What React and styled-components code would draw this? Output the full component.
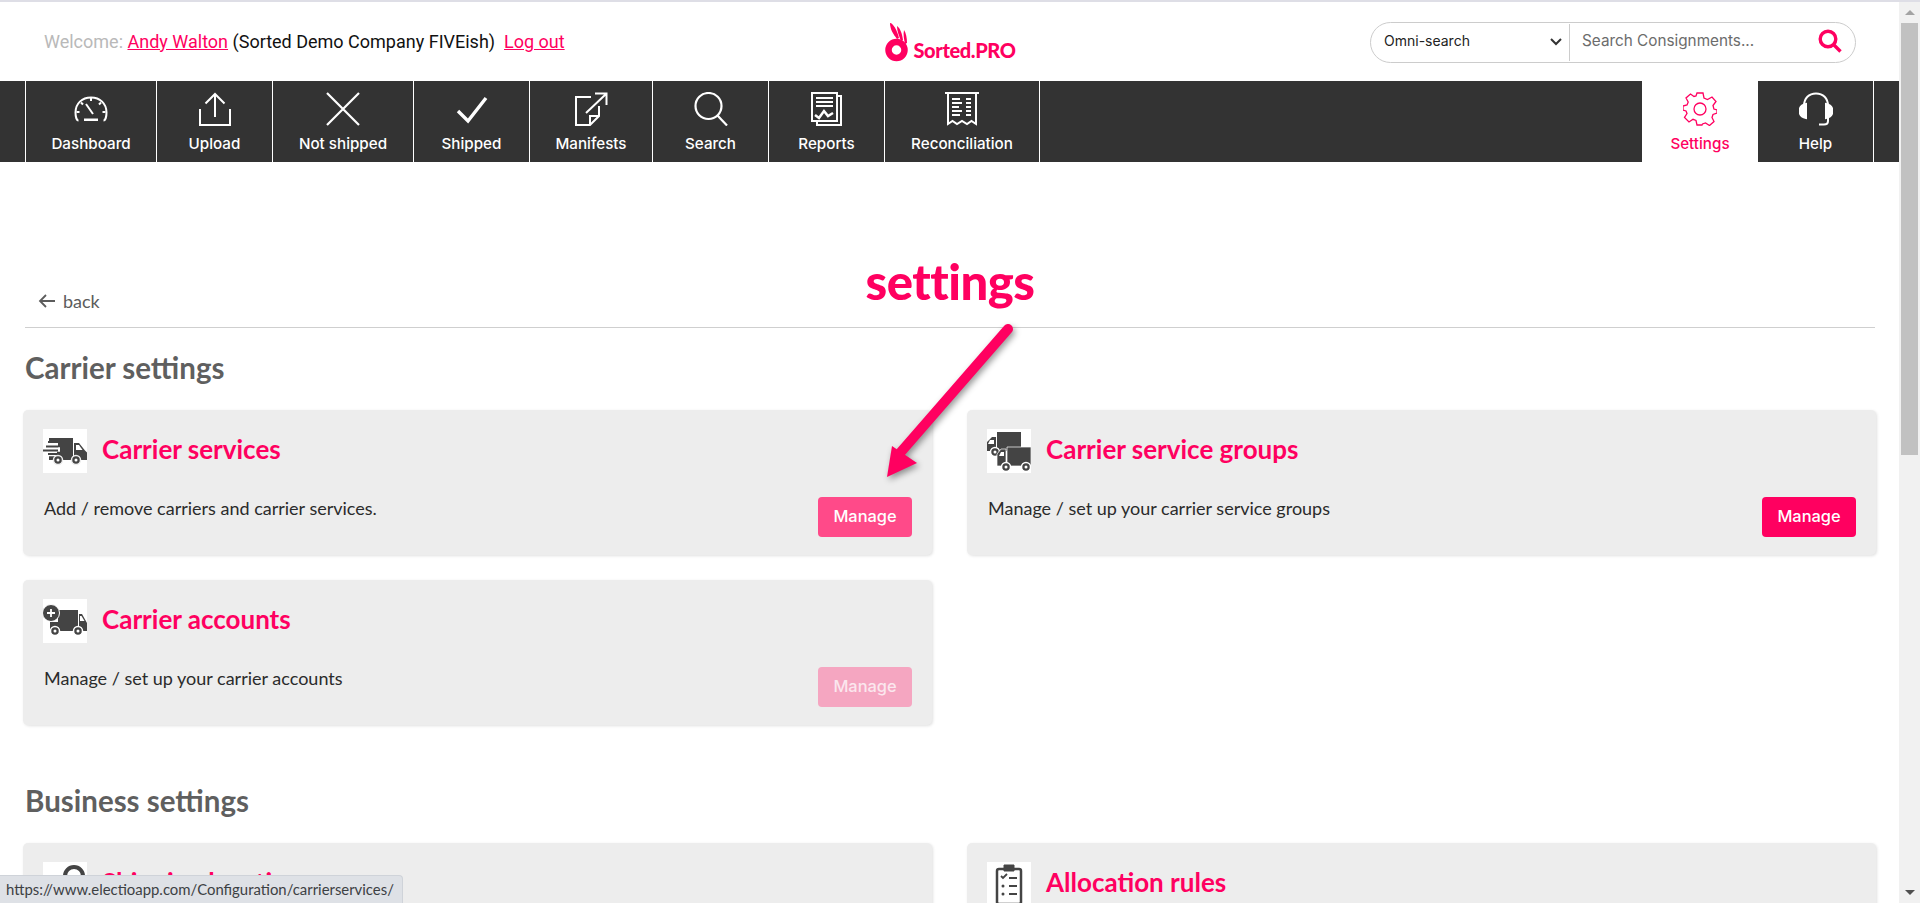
import React from 'react';
import styled, { createGlobalStyle } from 'styled-components';

const PINK = '#ff0060';
const Global = createGlobalStyle`
  html, body { margin: 0; padding: 0; height: 903px; overflow: hidden; background: #fff; }
  * { box-sizing: border-box; }
  body { font-family: "Lato", "Liberation Sans", sans-serif; color: #333; }
`;

const Page = styled.div`
  position: relative; width: 1920px; height: 903px; overflow: hidden; display: flex; flex-direction: column;
`;
const TopStrip = styled.div`height: 2px; background: #dedee6; flex: none;`;
const Body = styled.div`flex: 1; display: flex; min-height: 0;`;
const Main = styled.div`flex: 1; min-width: 0; overflow: hidden; display: flex; flex-direction: column;`;

const Scrollbar = styled.div`
  width: 21px; flex: none; background: #f1f1f1; display: flex; flex-direction: column; align-items: center;
`;
const ScrollBtn = styled.div`
  height: 21px; flex: none; display: flex; align-items: center; justify-content: center; width: 100%;
  margin-top: ${p => (p.$down ? 'auto' : '0')};
  &::before {
    content: ''; width: 0; height: 0; border-left: 5px solid transparent; border-right: 5px solid transparent;
    ${p => (p.$down ? 'border-top: 5px solid #505050;' : 'border-bottom: 5px solid #a3a3a3;')}
  }
`;
const Thumb = styled.div`width: 17px; height: 432px; background: #c1c1c1; flex: none;`;

const Header = styled.header`
  height: 79px; flex: none; display: grid; grid-template-columns: 1fr auto 1fr; align-items: center;
  padding: 0 43px 0 44px;
`;
const Welcome = styled.div`
  font-family: "Roboto", "Liberation Sans", sans-serif; font-size: 18px; color: #111; white-space: nowrap;
`;
const Muted = styled.span`color: #b9b9b9;`;
const TopLink = styled.a`color: ${PINK}; text-decoration: underline;`;
const LogoWrap = styled.div`display: flex; align-items: flex-end; gap: 3px; height: 40px;`;
const LogoText = styled.span`
  font-family: "Lato", sans-serif; font-weight: 900; font-size: 20px; line-height: 24px; color: ${PINK};
  letter-spacing: -0.4px;
`;
const SearchBox = styled.div`
  justify-self: end; width: 486px; height: 41px; border: 1px solid #ccc; border-radius: 21px;
  display: flex; align-items: center; margin-top: 1px;
`;
const OmniSelect = styled.div`
  width: 199px; height: 37px; flex: none; border-right: 1px solid #ccc; padding: 0 7px 4px 13px;
  display: flex; align-items: center; justify-content: space-between;
  font-family: "Inter", sans-serif; font-size: 14px; color: #222;
  svg { margin-top: 4px; }
`;
const SearchField = styled.div`
  flex: 1; padding: 0 13px 3px 12px; display: flex; align-items: center; justify-content: space-between;
  font-family: "Inter", sans-serif; font-size: 15.3px; color: #6c6c6c;
`;

const Nav = styled.nav`
  height: 81px; flex: none; background: #333; display: flex; padding-left: 25px; font-family: "Inter", sans-serif;
`;
const NavItem = styled.a`
  width: ${p => p.$w}px; flex: none; display: flex; flex-direction: column; align-items: center;
  padding-top: 11px; font-size: 15.2px; font-weight: 500; line-height: 18px;
  color: ${p => (p.$active ? PINK : '#fff')};
  background: ${p => (p.$active ? '#fff' : 'transparent')};
  border-left: ${p => (p.$active || p.$noEdge ? '0' : '1px solid #fff')};
  border-right: ${p => (p.$last ? '1px solid #fff' : '0')};
  svg { display: block; margin-bottom: 9px; }
`;
const NavSpacer = styled.div`flex: 1;`;
const NavEnd = styled.div`flex: 0 0 25px;`;

const Content = styled.main`padding: 0 23px 0 23px; flex: none;`;
const BackRow = styled.div`
  display: grid; grid-template-columns: 1fr auto 1fr; padding-top: 91px; padding-bottom: 14px;
  margin: 0 1px 0 2px; border-bottom: 1px solid #cfcfcf; height: 166px;
`;
const BackLink = styled.a`
  align-self: end; display: flex; align-items: center; gap: 7px; padding-left: 13px; margin-top: 1px;
  font-size: 18px; line-height: 24px; color: #5c5c5c;
`;
const PageTitle = styled.h1`
  margin: 0; font-weight: 900; font-size: 49px; line-height: 56px; color: ${PINK}; letter-spacing: -0.5px;
`;
const SectionTitle = styled.h2`
  margin: ${p => p.$top}px 0 26px 2px; font-weight: 700; font-size: 29.5px; line-height: 32px; color: #5f5f5f;
`;
const CardGrid = styled.div`display: grid; grid-template-columns: 909px 909px; gap: 25px 35px;`;
const Card = styled.section`
  min-height: 145px; background: #ededed; border-radius: 5px; padding: 19px 20px 0 20px;
  box-shadow: 1px 1px 3px rgba(0,0,0,.12);
`;
const CardHead = styled.div`display: flex; align-items: center; gap: 15px;`;
const IconBox = styled.div`
  width: 44px; height: 44px; background: #fff; flex: none;
  svg { display: block; }
`;
const CardTitle = styled.h3`margin: 0 0 4px; font-weight: 700; font-size: 26px; line-height: 28px; color: ${PINK};`;
const CardRow = styled.div`display: flex; justify-content: space-between; align-items: flex-start; margin-top: 23px; padding-left: 1px;`;
const CardText = styled.p`margin: 0; font-size: 18px; line-height: 24px; color: #2b2b2b;`;
const ManageBtn = styled.button`
  width: 94px; height: 40px; border: 0; border-radius: 4px; flex: none; margin-top: 1px; padding: 0 0 2px;
  font-family: "Inter", sans-serif; font-weight: 500; font-size: 16.4px;
  background: ${p => ({ hover: '#ff4a89', off: '#f5a6c1' }[p.$state] || PINK)};
  color: ${p => (p.$state === 'off' ? '#fbe7ee' : '#fff')};
`;
const StatusBar = styled.div`
  position: absolute; left: 0; bottom: 0; width: 403px; height: 28px; background: #dee1e6;
  border: 1px solid #cfd3d9; border-left: 0; border-bottom: 0; border-top-right-radius: 4px;
  padding-left: 6px; font-size: 14.9px; line-height: 27px; color: #3c4043; white-space: nowrap;
`;
const ArrowOverlay = styled.svg`
  position: absolute; left: 870px; top: 315px; filter: drop-shadow(2px 3px 3px rgba(0,0,0,.4));
`;

const Ico = ({ children, color = '#fff', sw = 2 }) => (
  <svg width="34" height="34" viewBox="0 0 34 34" fill="none" stroke={color} strokeWidth={sw}>{children}</svg>
);

const icons = {
  dash: <Ico><path d="M4.5 28.5C2.5 28.500 1.500 24 1.500 20.500 1.500 11.500 8 5.500 17 5.500s15.500 6 15.500 15c0 3.500-1 8-3 8" /><path d="M17 6v3M7 10.500l2 2M27 10.500l-2 2M2.500 20h3M31.500 20h-3M12 12l7 10" /><path d="M10 26.500h14v2.500H10z" fill="#fff" stroke="none" /></Ico>,
  upload: <Ico><path d="M2 17v16h30V17" /><path d="M17 25V2M7.500 11.500 17 2l9.500 9.500" /></Ico>,
  x: <Ico sw={2.2}><path d="M1 1l32 32M33 1 1 33" /></Ico>,
  check: <Ico sw={3.4}><path d="M3 19l10 10L31 6" /></Ico>,
  manifest: <Ico><path d="M17 5H2v28h14l9-9V14" /><path d="M16 33v-9h9" /><path d="M12 21 32 2M21 1.500h11.500V13" /></Ico>,
  search: <Ico sw={2.2}><circle cx="14.500" cy="14" r="13" /><path d="M23.500 23.500 33 33.500" /></Ico>,
  reports: <Ico><path d="M27 4h4v29H7v-4" /><rect x="2" y="1" width="25" height="28" /><path d="M6 6h17M6 10h17M6 14h17" /><path d="M5 23l4 3 5-7 4 5 5-3" strokeWidth="2.500" /></Ico>,
  recon: <Ico><path d="M0 1h34" /><path d="M3 1v31l4.500-3 4.500 3 5-3 5 3 4.500-3 4.500 3V1" /><path d="M7 7h8M7 11h10M7 15h7M7 19h10M7 23h8M21 7h5M21 11h5M21 15h5M21 19h5M21 23h5" /></Ico>,
  gear: <Ico color={PINK} sw={1.3}><circle cx="17" cy="17" r="6" /><path d="M14 1h6l1 5 3.500 1.500L29 5l4 4.500-3 4 .9 3.500 3.100 1v3l-4 1.500-1 3 2 4-4.500 4-4-2.500-3 1L19 33h-5l-1-4.500-3-1.200L6 30l-4.500-4.500L4 21.500 3 19l-3-1v-4l4-1 1.200-3L3 6l4.500-4L11 4.500 13 4z" /></Ico>,
  help: <Ico><path d="M5 18V14C5 6 10 1.500 17 1.500S29 6 29 14v15c0 2.500-2 3.500-4 3.500h-5" /><path d="M7 12C2 13 .5 16 .5 19s2 6 6.500 7zM27 12c5 1 6.500 4 6.500 7s-2 6-6.500 7z" fill="#fff" /></Ico>,
};

const navLeft = [
  ['Dashboard', 131, 'dash'], ['Upload', 116, 'upload'], ['Not shipped', 141, 'x'], ['Shipped', 116, 'check'],
  ['Manifests', 123, 'manifest'], ['Search', 116, 'search'], ['Reports', 116, 'reports'], ['Reconciliation', 156, 'recon'],
];

const D = '#444';
const FastTruck = () => (
  <svg width="44" height="44" viewBox="0 0 44 44">
    <path d="M6 9h24v22H6z" fill={D} />
    <path d="M31 14h5l6 7.500 2 2V31H31z" fill={D} />
    <path d="M33 16h3l3.500 5H33z" fill="#fff" />
    <path d="M0 16h15M3 20.500h14M0 25h14" stroke="#fff" strokeWidth="4.500" />
    <path d="M5 13h11M0 21.500h15M3 17.500h12M5 25h10" stroke={D} strokeWidth="2" />
    <circle cx="15" cy="31" r="4.500" fill={D} stroke="#ededed" strokeWidth="1.500" /><circle cx="15" cy="31" r="1.500" fill="#fff" />
    <circle cx="33" cy="31" r="4.500" fill={D} stroke="#ededed" strokeWidth="1.500" /><circle cx="33" cy="31" r="1.500" fill="#fff" />
  </svg>
);
const Trucks = () => (
  <svg width="44" height="44" viewBox="0 0 44 44">
    <path d="M10 3h24v15H20v4H10zM9 8H5L0 13v9h9z" fill={D} />
    <path d="M3 11h4v4H1z" fill="#fff" />
    <circle cx="8" cy="23" r="4.500" fill={D} stroke="#fff" strokeWidth="1.500" /><circle cx="8" cy="23" r="1.500" fill="#fff" />
    <path d="M20 18h24v19H20zM19 20h-5l-4 5v12h9z" fill={D} stroke="#fff" strokeWidth=".7" />
    <path d="M14 23h3v4h-5z" fill="#fff" />
    <circle cx="19" cy="38" r="4.500" fill={D} stroke="#fff" strokeWidth="1.500" /><circle cx="19" cy="38" r="1.500" fill="#fff" />
    <circle cx="39" cy="38" r="4.500" fill={D} stroke="#fff" strokeWidth="1.500" /><circle cx="39" cy="38" r="1.500" fill="#fff" />
  </svg>
);
const PlusTruck = () => (
  <svg width="44" height="44" viewBox="0 0 44 44">
    <path d="M15 11h20v21H7v-9h8zM36 15h3l5 9v8h-8z" fill={D} />
    <path d="M37 17h1.500l3 5H37z" fill="#fff" />
    <circle cx="8" cy="14" r="8.500" fill={D} stroke="#fff" strokeWidth="1" />
    <path d="M8 10v8M4 14h8" stroke="#fff" strokeWidth="1.800" />
    <circle cx="12" cy="32" r="4.500" fill={D} stroke="#fff" strokeWidth="1.500" /><circle cx="12" cy="32" r="1.500" fill="#fff" />
    <circle cx="35" cy="32" r="4.500" fill={D} stroke="#fff" strokeWidth="1.500" /><circle cx="35" cy="32" r="1.500" fill="#fff" />
  </svg>
);
const Pin = () => (
  <svg width="44" height="44" viewBox="0 0 44 44">
    <circle cx="31" cy="14" r="9" fill="none" stroke={D} strokeWidth="4" />
    <path d="M31 44 22 22h18z" fill={D} />
  </svg>
);
const Clipboard = () => (
  <svg width="44" height="44" viewBox="0 0 44 44" fill="none" stroke={D}>
    <rect x="10" y="7" width="24" height="35" rx="2" strokeWidth="2.500" />
    <path d="M17 3h10v6H17z" fill={D} strokeWidth="1" />
    <path d="M14 14l2 2 4-4" strokeWidth="1.800" />
    <path d="M22 16h8M22 24h8M22 32h8" strokeWidth="2" />
    <circle cx="16" cy="24" r="1.500" fill={D} stroke="none" />
    <circle cx="16" cy="32" r="1.500" fill={D} stroke="none" />
  </svg>
);
const LogoMark = () => (
  <svg width="26" height="40" viewBox="0 0 26 40">
    <circle cx="11.500" cy="28" r="8" fill="none" stroke={PINK} strokeWidth="6.500" />
    <path d="M5 1c3 0 7 7 9 15l-2 1C8 12 5 7 5 1z" fill={PINK} />
    <path d="M12 4c3 2 5 7 6 14l-2 1C14 14 12 9 12 4z" fill={PINK} />
    <path d="M19 8c2 3 3 8 3 13l-2 1c-1-5-2-9-1-14z" fill={PINK} />
  </svg>
);

const CardItem = ({ icon, title, text, state }) => (
  <Card>
    <CardHead><IconBox>{icon}</IconBox><CardTitle>{title}</CardTitle></CardHead>
    {text && (
      <CardRow>
        <CardText>{text}</CardText>
        <ManageBtn $state={state}>Manage</ManageBtn>
      </CardRow>
    )}
  </Card>
);

export default function App() {
  return (
    <Page>
      <Global />
      <TopStrip />
      <Body>
        <Main>
          <Header>
            <Welcome>
              <Muted>Welcome: </Muted><TopLink>Andy Walton</TopLink> (Sorted Demo Company FIVEish)&nbsp; <TopLink>Log out</TopLink>
            </Welcome>
            <LogoWrap><LogoMark /><LogoText>Sorted.PRO</LogoText></LogoWrap>
            <SearchBox>
              <OmniSelect>
                Omni-search
                <svg width="12" height="8" viewBox="0 0 12 8" fill="none" stroke="#333" strokeWidth="2"><path d="M1 1l5 5 5-5" /></svg>
              </OmniSelect>
              <SearchField>
                Search Consignments...
                <svg width="24" height="24" viewBox="0 0 24 24" fill="none" stroke={PINK} strokeWidth="3.400"><circle cx="10" cy="10" r="7.800" /><path d="M15.500 15.500l7 7" /></svg>
              </SearchField>
            </SearchBox>
          </Header>
          <Nav>
            {navLeft.map(([label, w, key], i) => (
              <NavItem key={label} $w={w} $last={i === navLeft.length - 1}>{icons[key]}{label}</NavItem>
            ))}
            <NavSpacer />
            <NavItem $w={116} $active>{icons.gear}Settings</NavItem>
            <NavItem $w={116} $noEdge $last>{icons.help}Help</NavItem>
            <NavEnd />
          </Nav>
          <Content>
            <BackRow>
              <BackLink>
                <svg width="18" height="14" viewBox="0 0 18 14" fill="none" stroke="#5c5c5c" strokeWidth="1.800"><path d="M17 7H2M8 1 2 7l6 6" /></svg>
                back
              </BackLink>
              <PageTitle>settings</PageTitle>
              <div />
            </BackRow>
            <SectionTitle $top={24}>Carrier settings</SectionTitle>
            <CardGrid>
              <CardItem icon={<FastTruck />} title="Carrier services" text="Add / remove carriers and carrier services." state="hover" />
              <CardItem icon={<Trucks />} title="Carrier service groups" text="Manage / set up your carrier service groups" />
              <CardItem icon={<PlusTruck />} title="Carrier accounts" text="Manage / set up your carrier accounts" state="off" />
            </CardGrid>
            <SectionTitle $top={60}>Business settings</SectionTitle>
            <CardGrid>
              <CardItem icon={<Pin />} title="Shipping locations" />
              <CardItem icon={<Clipboard />} title="Allocation rules" />
            </CardGrid>
          </Content>
        </Main>
        <Scrollbar>
          <ScrollBtn />
          <Thumb />
          <ScrollBtn $down />
        </Scrollbar>
      </Body>
      <ArrowOverlay width="160" height="180" viewBox="0 0 160 180">
        <path d="M138 14 30 138" stroke={PINK} strokeWidth="10" strokeLinecap="round" fill="none" />
        <path d="M17 162 22 131 47 148z" fill={PINK} />
      </ArrowOverlay>
      <StatusBar>https://www.electioapp.com/Configuration/carrierservices/</StatusBar>
    </Page>
  );
}
